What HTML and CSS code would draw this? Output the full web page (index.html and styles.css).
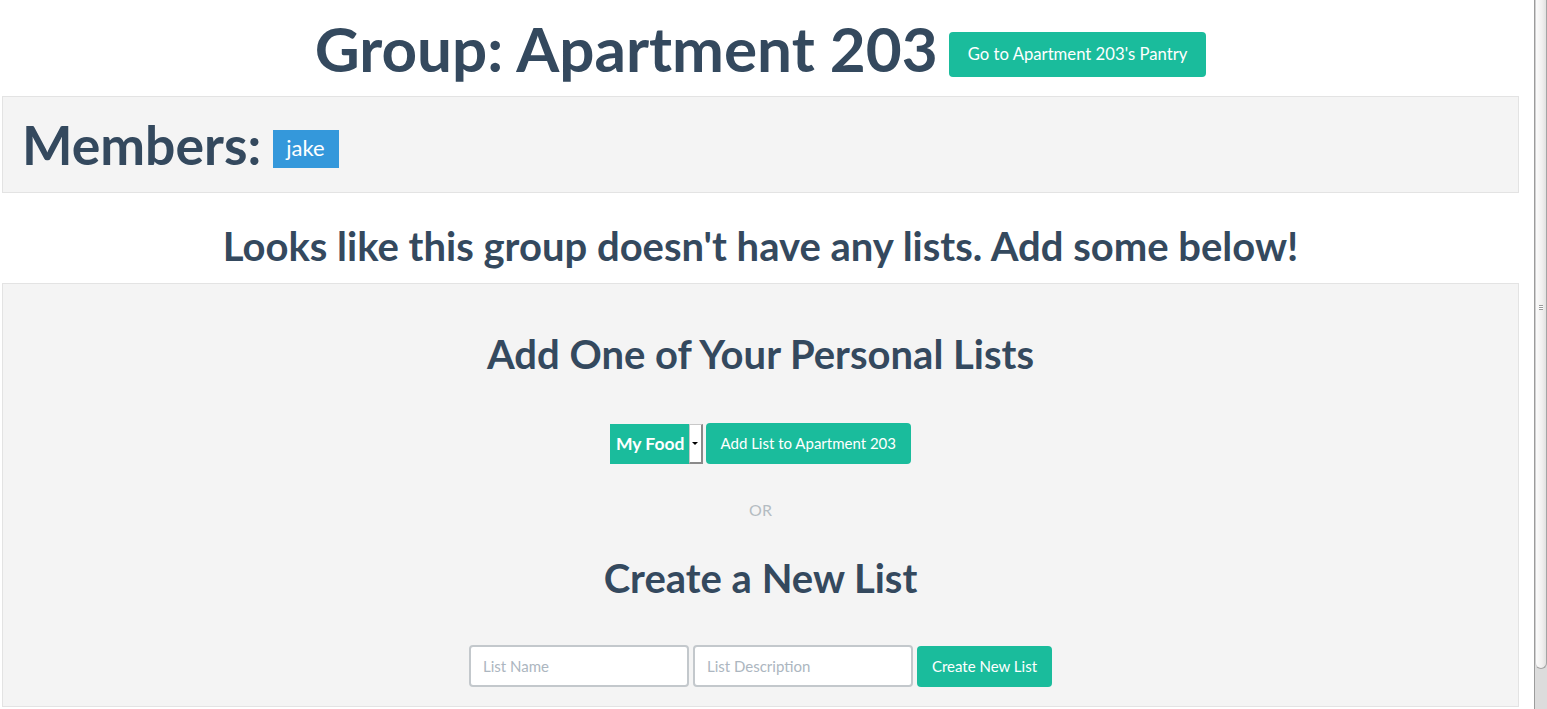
FILE: index.html
```html
<!DOCTYPE html>
<html lang="en">
<head>
<meta charset="utf-8">
<title>Group: Apartment 203</title>
<link rel="stylesheet" href="styles.css">
</head>
<body>
<div class="page">
  <main class="main">
    <h1 class="group-title">Group: Apartment 203 <a class="btn btn-lg-ish" href="#">Go to Apartment 203's Pantry</a></h1>

    <section class="well members">
      <h1 class="members-title">Members: <span class="label">jake</span></h1>
    </section>

    <h2 class="empty-note">Looks like this group doesn't have any lists. Add some below!</h2>

    <section class="well lists">
      <h2 class="section-title">Add One of Your Personal Lists</h2>
      <form class="row add-row">
        <div class="fake-select">
          <span class="fake-select-value">My Food</span>
          <span class="fake-select-arrow"><span class="caret"></span></span>
        </div>
        <button class="btn" type="button">Add List to Apartment 203</button>
      </form>
      <p class="or">OR</p>
      <h2 class="section-title create-title">Create a New List</h2>
      <form class="row create-row">
        <input class="input" type="text" placeholder="List Name">
        <input class="input" type="text" placeholder="List Description">
        <button class="btn" type="button">Create New List</button>
      </form>
    </section>
  </main>
  <div class="scrollbar">
    <div class="thumb"><span class="grip"></span></div>
  </div>
</div>
</body>
</html>
```
FILE: styles.css
```css
* { box-sizing: border-box; }
html, body {
  margin: 0;
  padding: 0;
  height: 709px;
  overflow: hidden;
  background: #fff;
}
body {
  font-family: "Lato", "Open Sans", "Liberation Sans", sans-serif;
  color: #34495e;
}
.page {
  display: flex;
  height: 709px;
}
.main {
  width: 1534px;
  flex: none;
  padding: 0 15px 0 2px;
}
h1, h2, p { margin: 0; }

.group-title {
  text-align: center;
  font-size: 62px;
  line-height: 72px;
  font-weight: 700;
  margin-top: 12px;
  white-space: nowrap;
}
.btn {
  display: inline-block;
  vertical-align: middle;
  background: #1abc9c;
  color: #fff;
  border: none;
  border-radius: 4px;
  font-family: "Lato", "Open Sans", sans-serif;
  font-size: 15px;
  font-weight: 400;
  line-height: 21px;
  padding: 10px 15px;
  text-decoration: none;
  cursor: pointer;
}
.btn-lg-ish {
  font-size: 16.7px;
  line-height: 22px;
  padding: 11px 19px 12px;
  margin-left: -4px;
  position: relative;
  top: -2px;
}

.well {
  background: #f4f4f4;
  border: 1px solid #e3e3e3;
  padding: 19px;
}
.members { margin-top: 12px; }
.members-title {
  font-size: 53.5px;
  line-height: 57px;
  font-weight: 700;
  white-space: nowrap;
}
.label {
  display: inline-block;
  vertical-align: middle;
  background: #3498db;
  color: #fff;
  font-size: 22px;
  font-weight: 400;
  line-height: 28px;
  padding: 4px 14px 6px 13px;
  margin-left: -1px;
  position: relative;
  top: -2px;
}

.empty-note {
  text-align: center;
  font-size: 40px;
  line-height: 46px;
  font-weight: 700;
  margin: 30px 0 14px;
}

.lists { padding-top: 47px; }
.section-title {
  text-align: center;
  font-size: 40px;
  line-height: 46px;
  font-weight: 700;
}
.row {
  display: flex;
  justify-content: center;
  align-items: center;
  gap: 3px;
}
.add-row { margin-top: 46px; }
.fake-select {
  display: flex;
  height: 40px;
  background: #1abc9c;
  align-items: stretch;
}
.fake-select-value {
  color: #fff;
  font-size: 17.5px;
  font-weight: 700;
  line-height: 40px;
  padding: 0 4px 0 6px;
}
.fake-select-arrow {
  width: 14px;
  background: #fff;
  border: 1px solid #c8c8c8;
  border-right: 2px solid #8a8a8a;
  border-bottom: 2px solid #8a8a8a;
  display: flex;
  align-items: center;
  justify-content: center;
}
.caret {
  width: 0;
  height: 0;
  border-left: 3px solid transparent;
  border-right: 3px solid transparent;
  border-top: 3px solid #000;
}
.add-row .btn { height: 41px; padding: 10px 15px; }

.or {
  text-align: center;
  color: #b4bcc2;
  font-size: 16px;
  line-height: 20px;
  margin-top: 36px;
}
.create-title { margin-top: 35px; }
.create-row { margin-top: 44px; gap: 4px; }
.input {
  width: 220px;
  height: 42px;
  border: 2px solid #c3c8cc;
  border-radius: 4px;
  background: #fff;
  font-family: "Lato", "Open Sans", sans-serif;
  font-size: 15px;
  color: #2c3e50;
  padding: 0 12px;
}
.input::placeholder { color: #acb6c0; }
.create-row .btn { height: 41px; }

.scrollbar {
  width: 13px;
  flex: none;
  background: #dcdcdc;
  border-left: 1px solid #9c9c9c;
  display: flex;
  flex-direction: column;
}
.thumb {
  height: 669px;
  background: linear-gradient(to right, #fbfbfb, #f1f0ef 60%, #e2e1e0);
  border-right: 1px solid #a4a4a4;
  border-bottom: 1px solid #a4a4a4;
  border-left: 1px solid #d0d0d0;
  border-radius: 0 0 6px 6px;
  display: flex;
  justify-content: center;
  padding-top: 305px;
}
.grip {
  width: 4px;
  height: 5px;
  border-top: 1px solid #9a9a9a;
  border-bottom: 1px solid #9a9a9a;
  background: linear-gradient(#fff 0 1px, #9a9a9a 1px 2px, #fff 2px);
  background-size: 100% 3px;
  background-repeat: no-repeat;
  background-position: 0 0;
}
```
